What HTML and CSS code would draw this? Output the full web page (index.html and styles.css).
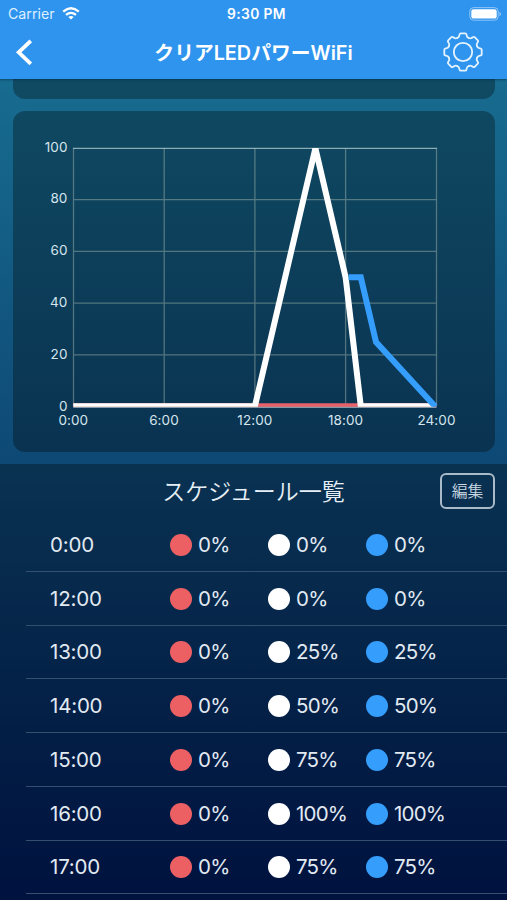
FILE: index.html
```
<!DOCTYPE html>
<html lang="ja">
<head>
<meta charset="utf-8">
<title>クリアLEDパワーWiFi</title>
<link rel="stylesheet" href="styles.css">
</head>
<body>
<div class="screen">
  <header class="header">
    <div class="status">
      <div class="carrier"><span>Carrier</span>
        <svg width="18" height="13" viewBox="0 0 18 13"><g fill="none" stroke="#fff" stroke-width="2.3"><path d="M1.2 4.7Q9-2.1 16.8 4.7"/><path d="M4 7.9Q9 3.8 14 7.9"/></g><path d="M6.3 9.9Q9 8 11.7 9.9L9 12.6Z" fill="#fff"/></svg>
      </div>
      <div class="clock">9:30 PM</div>
      <svg class="battery" width="33" height="14" viewBox="0 0 33 14"><rect x=".8" y=".6" width="28.4" height="12.6" rx="3.8" fill="none" stroke="#fff" stroke-opacity=".45"/><rect x="2.3" y="2.2" width="25.4" height="9.4" rx="2.2" fill="#fff"/><path d="M30.5 4.8Q32 5.5 32 7T30.5 9.2Z" fill="#fff" fill-opacity=".5"/></svg>
    </div>
    <nav class="nav">
      <svg class="back" width="20" height="30" viewBox="0 0 20 30"><path d="M15.8 3.8L3.7 15.3L15.8 26.8" fill="none" stroke="#fff" stroke-width="3.8"/></svg>
      <h1 class="title">クリアLEDパワーWiFi</h1>
      <svg class="gear" width="42" height="42" viewBox="-21 -21 42 42">
        <defs><path id="tooth" d="M-5.8-14Q-4-14.8-3.8-16.2L-3.4-17.8Q-3.2-18.7-2.2-18.7H2.2Q3.2-18.7 3.4-17.8L3.8-16.2Q4-14.8 5.8-14"/></defs>
        <g fill="none" stroke="#e4f3ff" stroke-width="1.8" stroke-linecap="round">
          <use href="#tooth"/><use href="#tooth" transform="rotate(45)"/><use href="#tooth" transform="rotate(90)"/><use href="#tooth" transform="rotate(135)"/><use href="#tooth" transform="rotate(180)"/><use href="#tooth" transform="rotate(225)"/><use href="#tooth" transform="rotate(270)"/><use href="#tooth" transform="rotate(315)"/>
          <circle r="9.2"/>
        </g>
      </svg>
    </nav>
  </header>
  <main>
    <section class="panel panel-top"></section>
    <section class="panel panel-chart">
      <svg class="chart" width="482" height="341" viewBox="13 111 482 341">
        <g fill="none" stroke="#b5c5b5" stroke-opacity=".42" stroke-width="1.3">
          <path d="M73.5 199.7H436.5M73.5 251.4H436.5M73.5 303.2H436.5M73.5 354.8H436.5M73.5 148V406M164.2 148V406M254.9 148V406M345.6 148V406M436.5 148V406"/>
        </g>
        <path d="M73 148.3H437" stroke="#a9c6c9" stroke-opacity=".8" stroke-width="1.3"/>
        <path d="M73.3 407H436.5" stroke="#aebdc5" stroke-width="1.5"/>
        <clipPath id="plot"><rect x="73" y="148" width="364" height="258.7"/></clipPath>
        <g fill="none" stroke-width="6" clip-path="url(#plot)">
          <path d="M73.3 406.3H436.5" stroke="#e9616a"/>
          <path d="M73.3 406.3H254.9L315.4 148.3L345.6 277.2L360.8 406.3H433" stroke="#fff" stroke-linejoin="bevel"/>
          <path d="M348.6 277.2H360.8L376 342L435.5 406.8" stroke="#359dfb"/>
        </g>
        <g class="ylabels"><text x="67.5" y="151.5">100</text><text x="67.5" y="203.3">80</text><text x="67.5" y="255.2">60</text><text x="67.5" y="307">40</text><text x="67.5" y="358.8">20</text><text x="67.5" y="410.5">0</text></g>
        <g class="xlabels"><text x="73.3" y="425.2">0:00</text><text x="164" y="425.2">6:00</text><text x="254.9" y="425.2">12:00</text><text x="345.6" y="425.2">18:00</text><text x="436.5" y="425.2">24:00</text></g>
      </svg>
    </section>
    <section class="schedule">
      <div class="schedule-head"><h2>スケジュール一覧</h2><button class="edit">編集</button></div>
      <ul class="rows">
        <li><time>0:00</time><span class="red">0%</span><span class="white">0%</span><span class="blue">0%</span></li>
        <li><time>12:00</time><span class="red">0%</span><span class="white">0%</span><span class="blue">0%</span></li>
        <li><time>13:00</time><span class="red">0%</span><span class="white">25%</span><span class="blue">25%</span></li>
        <li><time>14:00</time><span class="red">0%</span><span class="white">50%</span><span class="blue">50%</span></li>
        <li><time>15:00</time><span class="red">0%</span><span class="white">75%</span><span class="blue">75%</span></li>
        <li><time>16:00</time><span class="red">0%</span><span class="white">100%</span><span class="blue">100%</span></li>
        <li><time>17:00</time><span class="red">0%</span><span class="white">75%</span><span class="blue">75%</span></li>
      </ul>
    </section>
  </main>
</div>
</body>
</html>
```
FILE: styles.css
```
* { box-sizing: border-box; }
body { margin: 0; font-family: Inter, "Noto Sans CJK JP", sans-serif; color: #fff; }
svg { display: block; }
.screen { height: 900px; overflow: hidden; background: linear-gradient(#197493 0, #176a8e 100px, #0e4975 460px, #001a5a 900px); }
.header { position: relative; height: 79px; background: #2f94ee; box-shadow: 0 1px 2px rgba(0, 40, 70, .5); }
.status { display: grid; grid-template-columns: 1fr auto 1fr; align-items: center; height: 27px; padding: 0 5px 0 8px; }
.carrier { display: flex; align-items: center; gap: 7px; color: #dcefff; font-size: 14.2px; }
.clock { margin-left: 3px; font-weight: 600; font-size: 13.8px; letter-spacing: .4px; }
.battery { justify-self: end; }
.nav { display: grid; grid-template-columns: 48px 1fr 48px; align-items: center; height: 50px; padding: 0 23px 0 15px; }
.title { margin: 2px -8px 0 0; text-align: center; font-size: 19.8px; font-weight: 600; line-height: 30px; white-space: nowrap; }
.gear { justify-self: end; }
.panel { margin: 0 12px 0 13px; background: rgba(0, 0, 0, .31); border-radius: 12px; }
.panel-top { height: 20px; border-radius: 0 0 12px 12px; }
.panel-chart { height: 341px; margin-top: 12px; }
.chart text { fill: #d5e5ee; font-size: 13.5px; letter-spacing: .1px; }
.ylabels { text-anchor: end; }
.xlabels { text-anchor: middle; }
.schedule { margin-top: 12px; height: 436px; background: rgba(0, 0, 0, .3); }
.schedule-head { display: grid; grid-template-columns: 67px 1fr 67px; height: 54px; align-items: center; }
.schedule-head h2 { grid-column: 2; margin: 1px 0 0; text-align: center; font-size: 23px; font-weight: 350; color: #e6eff6; line-height: 32px; }
.edit { width: 55px; height: 36px; padding: 0 0 1px; border: 2px solid #a9bac8; border-radius: 6px; background: none; color: #cbd9e3; font: 350 15.8px/20px "Noto Sans CJK JP", sans-serif; }
.rows { list-style: none; margin: 0 0 0 26px; padding: 0; }
.rows li { display: grid; grid-template-columns: 144px 98px 98px 1fr; align-items: center; height: 53.75px; padding: 1px 0 0 24px; border-bottom: 1px solid #34506f; font-size: 20.5px; line-height: 24px; color: #e2eaf2; }
.rows time { letter-spacing: -.2px; }
.rows span { display: flex; align-items: center; gap: 6.5px; margin-left: -24.5px; letter-spacing: -.8px; }
.rows span::before { content: ""; width: 22px; height: 22px; border-radius: 50%; flex: none; }
.red::before { background: #ec6064; }
.white::before { background: #fff; }
.blue::before { background: #359dfb; }
```
